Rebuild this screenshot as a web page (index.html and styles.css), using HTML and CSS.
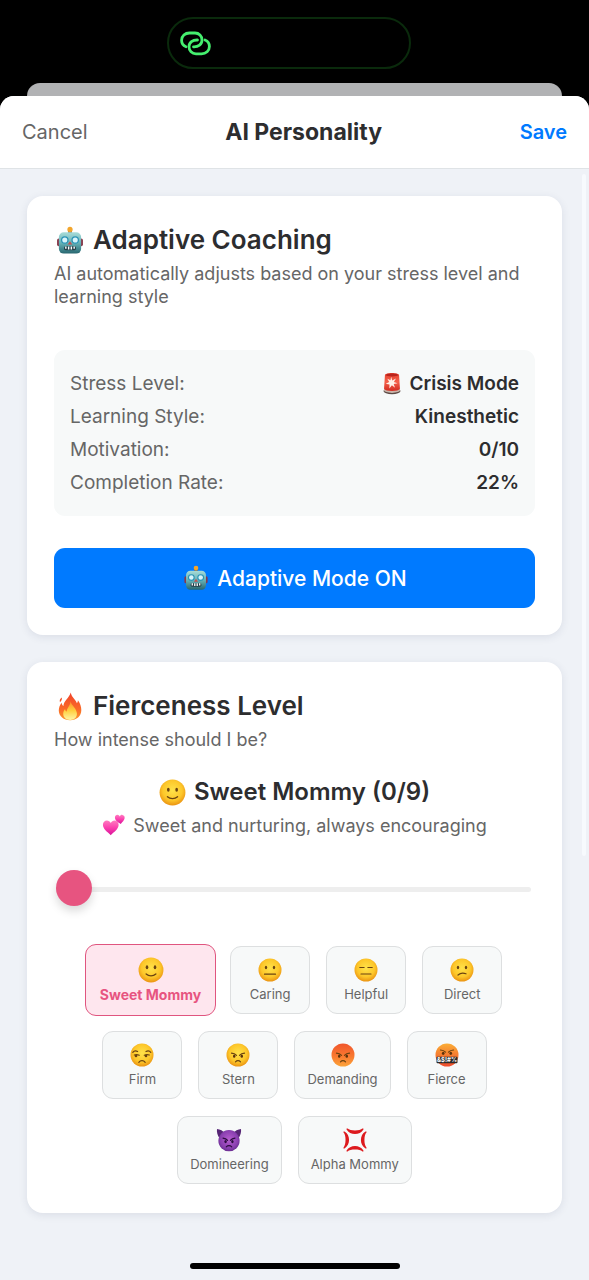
FILE: index.html
```html
<!DOCTYPE html>
<html lang="en">
<head>
    <meta charset="UTF-8">
    <meta name="viewport" content="width=device-width, initial-scale=1.0">
    <title>AI Personality</title>
    <link rel="stylesheet" href="styles.css">
</head>
<body>
    <!-- shared emoji shapes -->
    <svg class="sprite" aria-hidden="true">
        <defs>
            <radialGradient id="yellow" cx="50%" cy="42%" r="58%">
                <stop offset="0" stop-color="#ffe24a"/>
                <stop offset="0.65" stop-color="#fdc72a"/>
                <stop offset="1" stop-color="#eb9412"/>
            </radialGradient>
            <linearGradient id="orange" x1="0" y1="0" x2="0" y2="1">
                <stop offset="0" stop-color="#f0562c"/>
                <stop offset="0.55" stop-color="#f97930"/>
                <stop offset="1" stop-color="#fba43a"/>
            </linearGradient>
            <linearGradient id="swear" x1="0" y1="0" x2="0" y2="1">
                <stop offset="0" stop-color="#fbae36"/>
                <stop offset="1" stop-color="#ef4a2b"/>
            </linearGradient>
            <radialGradient id="purple" cx="50%" cy="45%" r="58%">
                <stop offset="0" stop-color="#b75fd0"/>
                <stop offset="0.7" stop-color="#8a3fb0"/>
                <stop offset="1" stop-color="#642a8c"/>
            </radialGradient>
            <linearGradient id="metal" x1="0" y1="0" x2="0" y2="1">
                <stop offset="0" stop-color="#a9dcd8"/>
                <stop offset="0.5" stop-color="#66b3b8"/>
                <stop offset="1" stop-color="#27666f"/>
            </linearGradient>
            <linearGradient id="flame" x1="0" y1="0" x2="0" y2="1">
                <stop offset="0" stop-color="#f0432b"/>
                <stop offset="0.6" stop-color="#fa6a28"/>
                <stop offset="1" stop-color="#fb9a2c"/>
            </linearGradient>
            <linearGradient id="flame-core" x1="0" y1="0" x2="0" y2="1">
                <stop offset="0" stop-color="#fc8b2b"/>
                <stop offset="0.5" stop-color="#ffcf3f"/>
                <stop offset="1" stop-color="#fff6a8"/>
            </linearGradient>
            <linearGradient id="pink" x1="0" y1="0" x2="0" y2="1">
                <stop offset="0" stop-color="#ff7cc0"/>
                <stop offset="0.5" stop-color="#fb3fae"/>
                <stop offset="1" stop-color="#d9149a"/>
            </linearGradient>
            <linearGradient id="siren-red" x1="0" y1="0" x2="0" y2="1">
                <stop offset="0" stop-color="#e4402f"/>
                <stop offset="0.5" stop-color="#f4604a"/>
                <stop offset="1" stop-color="#d22a20"/>
            </linearGradient>
        </defs>

        <symbol id="robot" viewBox="0 0 28 30">
            <path d="M14 4v4" stroke="#6b5a4a" stroke-width="4"/>
            <circle cx="14" cy="3.6" r="2.7" fill="#f2a52c"/>
            <rect x="0.6" y="13" width="4" height="8" rx="1.8" fill="#87394b"/>
            <rect x="23.4" y="13" width="4" height="8" rx="1.8" fill="#87394b"/>
            <rect x="2.5" y="6.5" width="23" height="22" rx="5" fill="url(#metal)"/>
            <circle cx="8.6" cy="14.5" r="3.3" fill="#d8f4fb" stroke="#2a93b5" stroke-width="1.3"/>
            <circle cx="19.4" cy="14.5" r="3.3" fill="#d8f4fb" stroke="#2a93b5" stroke-width="1.3"/>
            <path d="M14 15.8l2.4 3.4h-4.8z" fill="#c4504f"/>
            <rect x="7.8" y="21" width="12.4" height="4" rx="1.6" fill="#243f48"/>
            <path d="M9.7 21.2v2.4M12.6 21.2v3M15.4 21.2v3M18.3 21.2v2.4" stroke="#fff" stroke-width="1.5"/>
        </symbol>

        <symbol id="siren" viewBox="0 0 22 26">
            <ellipse cx="11" cy="21.6" rx="9.6" ry="3.6" fill="#5b4a45"/>
            <ellipse cx="11" cy="20.6" rx="9.2" ry="3" fill="#c9b5aa"/>
            <path d="M3 3.6C3 2.3 6 1.2 11 1.2s8 1.1 8 2.4L20 19c-1 1.7-4.5 2.5-9 2.5S3 20.7 2 19z" fill="url(#siren-red)"/>
            <ellipse cx="11" cy="3.4" rx="7" ry="1.6" fill="#b9241d"/>
            <path d="M10 5.5l1.3 4 4.2-2.2-2.4 3.9 4.2 1.5-4.4.8 1.5 4.2-3.5-2.7-2.9 3.7.2-4.7-4.3-.6 3.9-2-2.1-3.7 3.6 1.7z" fill="#fff1e8"/>
        </symbol>

        <symbol id="fire" viewBox="0 0 26 30">
            <path d="M13.8.6c.3 2.6 1.8 4.6 3.8 6.8 1.2 1.3 2.1 2.7 2.6 4.2.7-.8 1-1.8 1-3 2.3 3.200 3.500 6.700 3.500 10.100 0 6.300-4.900 10.600-11.500 10.600S1.400 25.100 1.400 19.200c0-3.300 1.200-6 2.900-8.200.3 1.600.9 2.800 1.900 3.600C6.300 9 12 6.700 13.800.6z" fill="url(#flame)"/>
            <path d="M4.6 5.6c-2 1.3-2.600 2.900-2 4.900 1.300-1.200 2.300-2.700 2-4.900z" fill="#f0532b"/>
            <path d="M13.600 9.500c.5 4.200 6.600 7.400 6.600 13 0 4-3 6.400-7 6.400-4.300 0-7.300-2.500-7.200-6.700.1-2 .8-3.400 1.900-4.700.2 1.400.8 2.300 1.700 2.800.1-4 3.700-5.900 4-10.800z" fill="url(#flame-core)"/>
        </symbol>

        <symbol id="hearts" viewBox="0 0 26 26">
            <path d="M9.5 24C5.5 20.3 1 17.2 1 12.8 1 9.9 3 8 5.3 8c1.900 0 3.400 1 4.200 2.700C10.300 9 11.800 8 13.700 8 16 8 18 9.900 18 12.800c0 4.400-4.500 7.500-8.500 11.200z" fill="url(#pink)"/>
            <path d="M20.300 11.800c-2.700-1.700-6.400-3.700-6.300-7 .1-1.700 1.300-2.800 2.700-2.800 1.200 0 2.100.8 2.500 1.800.6-1.300 1.700-2 3-1.700 1.600.3 2.600 1.700 2.300 3.500-.4 2.300-2.500 4-4.200 6.200z" fill="url(#pink)"/>
        </symbol>

        <symbol id="smile" viewBox="0 0 24 24">
            <circle cx="12" cy="12" r="11.5" fill="url(#yellow)"/>
            <ellipse cx="8.3" cy="9.5" rx="1.2" ry="1.8" fill="#6b4310"/>
            <ellipse cx="15.7" cy="9.5" rx="1.2" ry="1.8" fill="#6b4310"/>
            <path d="M7.5 15.7c2.5 2.3 6.5 2.3 9 0" class="line"/>
        </symbol>

        <symbol id="neutral" viewBox="0 0 24 24">
            <circle cx="12" cy="12" r="11.5" fill="url(#yellow)"/>
            <ellipse cx="8" cy="9.5" rx="1.2" ry="1.8" fill="#6b4310"/>
            <ellipse cx="16" cy="9.5" rx="1.2" ry="1.8" fill="#6b4310"/>
            <path d="M6.5 16.2h11" class="line"/>
        </symbol>

        <symbol id="flat" viewBox="0 0 24 24">
            <circle cx="12" cy="12" r="11.5" fill="url(#yellow)"/>
            <path d="M5.8 9.5h4.3M13.9 9.5h4.3M7 16h10" class="line"/>
        </symbol>

        <symbol id="confused" viewBox="0 0 24 24">
            <circle cx="12" cy="12" r="11.5" fill="url(#yellow)"/>
            <ellipse cx="8" cy="9.5" rx="1.2" ry="1.7" fill="#6b4310"/>
            <ellipse cx="16" cy="9.5" rx="1.2" ry="1.7" fill="#6b4310"/>
            <path d="M8 17c2-1.7 5-2.2 8-1.2" class="line"/>
        </symbol>

        <symbol id="unamused" viewBox="0 0 24 24">
            <circle cx="12" cy="12" r="11.5" fill="url(#yellow)"/>
            <path d="M2.8 9.3c1.2-1.5 2.9-1.8 4.8-.8M16 8.500c1.900-1 3.600-.7 4.800.8" class="line"/>
            <path d="M4.3 12c1.6-.6 3.3-.5 5 .2M14.300 12.200c1.600-.7 3.300-.8 5-.2" class="line"/>
            <circle cx="6" cy="13" r="1.3" fill="#6b4310"/>
            <circle cx="16" cy="13" r="1.3" fill="#6b4310"/>
            <path d="M8.800 19.300c1.700-2.200 4.700-2.200 6.400 0" class="line"/>
        </symbol>

        <symbol id="brows" viewBox="0 0 24 24">
            <path d="M5.5 10.2c2 .1 3.7.7 5 2.1M18.5 10.2c-2 .1-3.7.7-5 2.1" class="line"/>
            <ellipse cx="8.2" cy="13.2" rx="1.2" ry="1.6" fill="#5b320c"/>
            <ellipse cx="15.8" cy="13.2" rx="1.2" ry="1.6" fill="#5b320c"/>
            <path d="M9.5 18.8c1.4-1.6 3.6-1.6 5 0" class="line"/>
        </symbol>

        <symbol id="angry" viewBox="0 0 24 24">
            <circle cx="12" cy="12" r="11.5" fill="url(#yellow)"/>
            <use href="#brows"/>
        </symbol>

        <symbol id="rage" viewBox="0 0 24 24">
            <circle cx="12" cy="12" r="11.5" fill="url(#orange)"/>
            <use href="#brows"/>
        </symbol>

        <symbol id="imp" viewBox="0 0 28 26">
            <path d="M1 1c3 .2 7 2.2 8.5 4.5L4 11C1.5 8.500.5 4 1 1zM27 1c-3 .2-7 2.200-8.500 4.500L24 11c2.500-2.500 3.500-7 3-10z" fill="#562575"/>
            <circle cx="14" cy="13.7" r="11.5" fill="url(#purple)"/>
            <path d="M7.5 11c2 .2 3.800 1 5 2.500M20.500 11c-2 .2-3.800 1-5 2.500M11 20.500c1.700-1.800 4.300-1.800 6 0" class="line dark"/>
            <ellipse cx="10.3" cy="14.7" rx="1.3" ry="1.8" fill="#2c0c40"/>
            <ellipse cx="17.7" cy="14.7" rx="1.3" ry="1.8" fill="#2c0c40"/>
        </symbol>

        <symbol id="anger" viewBox="0 0 24 24">
            <g fill="#dd1a1e">
                <path id="vein" d="M4.600.6C7 3.200 17 3.200 19.400.6c.7-.6 1.400.2 1 .9-3.400 6.100-13.400 6.100-16.800 0-.4-.7.3-1.500 1-.9z"/>
                <use href="#vein" transform="rotate(90 12 12)"/>
                <use href="#vein" transform="rotate(180 12 12)"/>
                <use href="#vein" transform="rotate(270 12 12)"/>
            </g>
        </symbol>
    </svg>

    <div class="status-bar">
        <div class="island">
            <svg class="link-icon" viewBox="0 0 31 25" aria-hidden="true">
                <path id="loop" d="M6 15.8C3 14.6 1.6 12 1.6 9.300 1.600 5 5 2 9.500 2H15c4 0 7 3 7 7 0 4.300-3.700 7-8.500 6.800"/>
                <use href="#loop" transform="rotate(180 15.5 12.4)"/>
            </svg>
        </div>
    </div>
    <div class="back-sheet"></div>

    <div class="sheet">
        <header class="header">
            <button class="cancel">Cancel</button>
            <h1>AI Personality</h1>
            <button class="save">Save</button>
        </header>

        <main class="content">
            <section class="card">
                <h2><svg><use href="#robot"/></svg>Adaptive Coaching</h2>
                <p class="subtitle">AI automatically adjusts based on your stress level and learning style</p>

                <dl class="stats">
                    <div><dt>Stress Level:</dt><dd><svg><use href="#siren"/></svg>Crisis Mode</dd></div>
                    <div><dt>Learning Style:</dt><dd>Kinesthetic</dd></div>
                    <div><dt>Motivation:</dt><dd>0/10</dd></div>
                    <div><dt>Completion Rate:</dt><dd>22%</dd></div>
                </dl>

                <button class="adaptive"><svg><use href="#robot"/></svg>Adaptive Mode ON</button>
            </section>

            <section class="card">
                <h2><svg><use href="#fire"/></svg>Fierceness Level</h2>
                <p class="subtitle">How intense should I be?</p>

                <h3><svg><use href="#smile"/></svg>Sweet Mommy (0/9)</h3>
                <p class="description"><svg><use href="#hearts"/></svg>Sweet and nurturing, always encouraging</p>

                <input class="slider" type="range" min="0" max="9" value="0" aria-label="Fierceness level">

                <div class="levels">
                    <button class="level selected"><svg><use href="#smile"/></svg>Sweet Mommy</button>
                    <button class="level"><svg><use href="#neutral"/></svg>Caring</button>
                    <button class="level"><svg><use href="#flat"/></svg>Helpful</button>
                    <button class="level"><svg><use href="#confused"/></svg>Direct</button>
                    <button class="level"><svg><use href="#unamused"/></svg>Firm</button>
                    <button class="level"><svg><use href="#angry"/></svg>Stern</button>
                    <button class="level"><svg><use href="#rage"/></svg>Demanding</button>
                    <button class="level">
                        <svg viewBox="0 0 24 24">
                            <circle cx="12" cy="12" r="11.5" fill="url(#swear)"/>
                            <path d="M5.5 7c2 .1 3.7.7 5 2.1M18.5 7c-2 .1-3.7.7-5 2.1" class="line"/>
                            <ellipse cx="8.2" cy="10.3" rx="1.3" ry="1.6" fill="#5b320c"/>
                            <ellipse cx="15.8" cy="10.3" rx="1.3" ry="1.6" fill="#5b320c"/>
                            <rect x="1.5" y="13.8" width="21" height="6.4" rx="1" fill="#2b2b2b"/>
                            <text x="12" y="19.3" text-anchor="middle" class="curse">&amp;$!#%</text>
                        </svg>
                        Fierce
                    </button>
                    <button class="level"><svg><use href="#imp"/></svg>Domineering</button>
                    <button class="level"><svg><use href="#anger"/></svg>Alpha Mommy</button>
                </div>
            </section>
        </main>

        <div class="scrollbar"></div>
        <div class="home-indicator"></div>
    </div>
</body>
</html>
```
FILE: styles.css
```css
* {
    box-sizing: border-box;
}
body {
    font-family: Inter, "Liberation Sans", sans-serif;
    background-color: #000;
    color: #2d2d2f;
    margin: 0;
}
h1, h2, h3, p, dl, dd {
    margin: 0;
}
button {
    font-family: inherit;
    border: none;
    background: none;
    padding: 0;
    cursor: pointer;
}
.sprite {
    position: absolute;
    width: 0;
    height: 0;
}
.line {
    fill: none;
    stroke: #6b4310;
    stroke-width: 1.2;
    stroke-linecap: round;
}
.dark {
    stroke: #2c0c40;
}
.curse {
    font-size: 6px;
    font-weight: 700;
    fill: #fff;
}

/* top of the screen */
.status-bar {
    display: flex;
    justify-content: center;
    padding: 17px 12px 14px 0;
}
.island {
    display: flex;
    align-items: center;
    width: 244px;
    height: 52px;
    padding-left: 11px;
    border: 2px solid #0a2a0c;
    border-radius: 26px;
}
.link-icon {
    width: 31px;
    height: 25px;
    fill: none;
    stroke: #45f06f;
    stroke-width: 2.8;
    stroke-linecap: round;
}
.back-sheet {
    height: 13px;
    margin: 0 27px;
    background-color: #b1b2b4;
    border-radius: 13px 13px 0 0;
}

/* sheet */
.sheet {
    position: relative;
    padding-bottom: 11px;
    background-color: #eff2f7;
    border-radius: 14px 14px 0 0;
}
.header {
    display: flex;
    align-items: center;
    justify-content: space-between;
    height: 73px;
    padding: 0 22px;
    background-color: #fff;
    border-bottom: 1px solid #dfe3e6;
    border-radius: 14px 14px 0 0;
}
.header h1 {
    font-size: 23px;
    font-weight: 700;
}
.header button {
    font-size: 20px;
}
.header .cancel {
    color: #666;
}
.header .save {
    color: #007aff;
    font-weight: 600;
}
.content {
    display: flex;
    flex-direction: column;
    gap: 27px;
    padding: 27px 27px 50px;
}
.card {
    padding: 27px;
    background-color: #fff;
    border-radius: 16px;
    box-shadow: 0 2px 8px rgba(40, 50, 90, 0.1);
}
.card h2 {
    display: flex;
    align-items: center;
    gap: 7px;
    margin-bottom: 5px;
    font-size: 26px;
    font-weight: 600;
    line-height: 34px;
}
.card h2 svg {
    width: 32px;
    height: 29px;
}
.subtitle, .description {
    color: #666;
    font-size: 18px;
    line-height: 23px;
}

/* stats */
.stats {
    margin: 42px 0 32px;
    padding: 17px 16px;
    background-color: #f7f9f9;
    border-radius: 11px;
    font-size: 19px;
    line-height: 33px;
}
.stats div {
    display: flex;
    justify-content: space-between;
}
.stats dt {
    color: #666;
}
.stats dd {
    display: flex;
    align-items: center;
    gap: 7px;
    font-weight: 600;
}
.stats svg {
    width: 20px;
    height: 23px;
}
.adaptive {
    display: flex;
    align-items: center;
    justify-content: center;
    gap: 7px;
    width: 100%;
    height: 60px;
    background-color: #007aff;
    border-radius: 11px;
    color: #fff;
    font-size: 21px;
    font-weight: 500;
}
.adaptive svg {
    width: 28px;
    height: 26px;
}

/* fierceness */
.card h3 {
    display: flex;
    align-items: center;
    justify-content: center;
    gap: 8px;
    margin: 25px 0 5px;
    font-size: 24px;
    font-weight: 600;
    line-height: 32px;
}
.card h3 svg {
    width: 27px;
    height: 27px;
}
.description {
    display: flex;
    align-items: center;
    justify-content: center;
    gap: 7px;
}
.description svg {
    width: 24px;
    height: 24px;
}
.slider {
    display: block;
    appearance: none;
    width: calc(100% - 6px);
    height: 37px;
    margin: 34px 2px 38px;
    background: none;
}
.slider::-webkit-slider-runnable-track {
    height: 5px;
    background-color: #eee;
    border-radius: 3px;
}
.slider::-webkit-slider-thumb {
    appearance: none;
    width: 36px;
    height: 36px;
    margin-top: -17px;
    background-color: #e75480;
    border-radius: 50%;
    box-shadow: 0 5px 10px rgba(0, 0, 0, 0.15);
}
.levels {
    display: flex;
    flex-wrap: wrap;
    align-items: center;
    justify-content: center;
    gap: 17px 16px;
    padding-bottom: 2px;
}
.level {
    display: flex;
    flex-direction: column;
    align-items: center;
    gap: 4px;
    min-width: 80px;
    padding: 11px 12px;
    background-color: #f7f9f9;
    border: 1px solid #dddfe0;
    border-radius: 11px;
    color: #666;
    font-size: 13px;
    line-height: 16px;
}
.level svg {
    width: 28px;
    height: 24px;
}
/* the active level is a little larger than its row */
.level.selected {
    margin: -2px;
    padding: 12px 14px;
    background-color: #fee6ee;
    border-color: #e0557f;
    color: #e75480;
    font-size: 14px;
    font-weight: 700;
}
.level.selected svg {
    height: 26px;
}

.scrollbar {
    position: absolute;
    top: 78px;
    right: 3px;
    width: 4px;
    height: 682px;
    background-color: #f7fafd;
    border-radius: 2px;
}
.home-indicator {
    width: 210px;
    height: 6px;
    margin: 0 auto;
    background-color: #000;
    border-radius: 3px;
}
```
